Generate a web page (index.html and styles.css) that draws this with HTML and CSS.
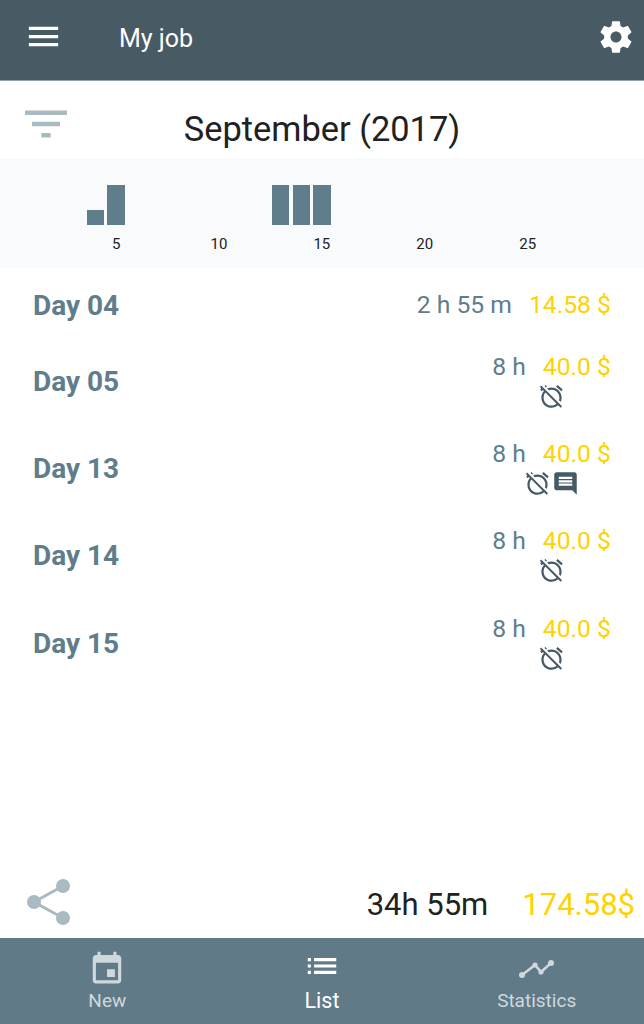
FILE: index.html
```html
<!DOCTYPE html>
<html lang="en">
<head>
<meta charset="utf-8">
<title>My job</title>
<link rel="stylesheet" href="styles.css">
</head>
<body>
<div class="app">
  <header class="topbar">
    <svg class="menu-icon" viewBox="0 0 24 24"><path d="M3 18h18v-2H3v2zm0-5h18v-2H3v2zm0-7v2h18V6H3z"/></svg>
    <span class="app-title">My job</span>
    <svg class="gear-icon" viewBox="0 0 24 24"><path d="M19.43 12.98c.04-.32.07-.64.07-.98s-.03-.66-.07-.98l2.11-1.65c.19-.15.24-.42.12-.64l-2-3.46c-.12-.22-.39-.3-.61-.22l-2.49 1c-.52-.4-1.08-.73-1.69-.98l-.38-2.65C14.46 2.18 14.25 2 14 2h-4c-.25 0-.46.18-.49.42l-.38 2.65c-.61.25-1.17.59-1.69.98l-2.49-1c-.23-.09-.49 0-.61.22l-2 3.46c-.13.22-.07.49.12.64l2.11 1.65c-.04.32-.07.65-.07.98s.03.66.07.98l-2.11 1.65c-.19.15-.24.42-.12.64l2 3.46c.12.22.39.3.61.22l2.49-1c.52.4 1.08.73 1.69.98l.38 2.65c.03.24.24.42.49.42h4c.25 0 .46-.18.49-.42l.38-2.65c.61-.25 1.17-.59 1.69-.98l2.49 1c.23.09.49 0 .61-.22l2-3.46c.12-.22.07-.49-.12-.64l-2.11-1.65zM12 15.5c-1.93 0-3.5-1.57-3.5-3.5s1.57-3.5 3.5-3.5 3.5 1.57 3.5 3.5-1.57 3.5-3.5 3.5z"/></svg>
  </header>

  <section class="month-row">
    <svg class="filter-icon" viewBox="0 0 24 24" preserveAspectRatio="none"><path d="M10 18h4v-2h-4v2zM3 6v2h18V6H3zm3 7h12v-2H6v2z"/></svg>
    <h1 class="month-title">September (2017)</h1>
  </section>

  <section class="chart">
    <div class="bars">
      <div class="bar-slot day-4"><div class="bar" style="height:15px"></div></div>
      <div class="bar-slot day-5"><div class="bar" style="height:40px"></div></div>
      <div class="bar-slot day-13"><div class="bar" style="height:40px"></div></div>
      <div class="bar-slot day-14"><div class="bar" style="height:40px"></div></div>
      <div class="bar-slot day-15"><div class="bar" style="height:40px"></div></div>
      <span class="tick day-5">5</span>
      <span class="tick day-10">10</span>
      <span class="tick day-15">15</span>
      <span class="tick day-20">20</span>
      <span class="tick day-25">25</span>
    </div>
  </section>

  <main class="days">
    <div class="day day-short">
      <span class="day-name">Day 04</span>
      <div class="day-info">
        <div class="amounts"><span class="hours">2 h 55 m</span><span class="money">14.58 $</span></div>
      </div>
    </div>
    <div class="day">
      <span class="day-name">Day 05</span>
      <div class="day-info">
        <div class="amounts"><span class="hours">8 h</span><span class="money">40.0 $</span></div>
        <div class="notes">
          <svg class="note-icon" viewBox="0 0 24 24"><use href="#alarm-off"/></svg>
        </div>
      </div>
    </div>
    <div class="day">
      <span class="day-name">Day 13</span>
      <div class="day-info">
        <div class="amounts"><span class="hours">8 h</span><span class="money">40.0 $</span></div>
        <div class="notes">
          <svg class="note-icon" viewBox="0 0 24 24"><use href="#alarm-off"/></svg>
          <svg class="note-icon flip" viewBox="0 0 24 24"><path d="M20 2H4c-1.1 0-1.99.9-1.99 2L2 22l4-4h14c1.1 0 2-.9 2-2V4c0-1.1-.9-2-2-2zm-2 12H6v-2h12v2zm0-3H6V9h12v2zm0-3H6V6h12v2z"/></svg>
        </div>
      </div>
    </div>
    <div class="day">
      <span class="day-name">Day 14</span>
      <div class="day-info">
        <div class="amounts"><span class="hours">8 h</span><span class="money">40.0 $</span></div>
        <div class="notes">
          <svg class="note-icon" viewBox="0 0 24 24"><use href="#alarm-off"/></svg>
        </div>
      </div>
    </div>
    <div class="day">
      <span class="day-name">Day 15</span>
      <div class="day-info">
        <div class="amounts"><span class="hours">8 h</span><span class="money">40.0 $</span></div>
        <div class="notes">
          <svg class="note-icon" viewBox="0 0 24 24"><use href="#alarm-off"/></svg>
        </div>
      </div>
    </div>
  </main>

  <section class="totals">
    <svg class="share-icon" viewBox="0 0 48 48">
      <path class="share-lines" d="M37 8 8 24l29 16"/>
      <circle cx="37" cy="8" r="7"/><circle cx="8" cy="24" r="7"/><circle cx="37" cy="40" r="7"/>
    </svg>
    <span class="total-hours">34h 55m</span>
    <span class="total-money">174.58$</span>
  </section>

  <nav class="tabs">
    <div class="tab">
      <svg class="tab-icon" viewBox="0 -2 24 24"><path d="M17 12h-5v5h5v-5zM16 1v2H8V1H6v2H5c-1.11 0-1.99.9-1.99 2L3 19c0 1.1.89 2 2 2h14c1.1 0 2-.9 2-2V5c0-1.1-.9-2-2-2h-1V1h-2zm3 18H5V8h14v11z"/></svg>
      <span class="tab-label">New</span>
    </div>
    <div class="tab tab-active">
      <svg class="tab-icon" viewBox="0 0 24 24"><path d="M3 13h2v-2H3v2zm0 4h2v-2H3v2zm0-8h2V7H3v2zm4 4h14v-2H7v2zm0 4h14v-2H7v2zM7 7v2h14V7H7z"/></svg>
      <span class="tab-label">List</span>
    </div>
    <div class="tab">
      <svg class="tab-icon" viewBox="0 -1 38 38">
        <path class="trend-line" d="M4 27 17 17l6 7L33 15"/>
        <circle cx="4" cy="27" r="3"/><circle cx="17" cy="17" r="2.6"/><circle cx="23" cy="24" r="2.6"/><circle cx="33" cy="15" r="3"/>
      </svg>
      <span class="tab-label">Statistics</span>
    </div>
  </nav>
</div>

<svg class="sprite" aria-hidden="true">
  <symbol id="alarm-off" viewBox="0 0 24 24">
    <path d="M12 6c3.87 0 7 3.13 7 7 0 .84-.16 1.65-.43 2.4l1.52 1.52c.58-1.19.91-2.51.91-3.92 0-4.97-4.03-9-9-9-1.41 0-2.73.33-3.92.91L9.6 6.43C10.35 6.16 11.16 6 12 6zm10-.28l-4.6-3.86-1.29 1.53 4.6 3.86L22 5.72zM2.92 2.29L1.65 3.57 2.98 4.9l-1.11.93 1.42 1.42 1.11-.94.8.8C3.83 8.69 3 10.75 3 13c0 4.97 4.03 9 9 9 2.25 0 4.31-.83 5.89-2.2l2.2 2.2 1.27-1.27L3.89 3.27l-.97-.98zm13.55 16.1C15.26 19.39 13.7 20 12 20c-3.87 0-7-3.13-7-7 0-1.7.61-3.26 1.61-4.47l9.86 9.86zM8.02 3.28L6.6 1.86l-.86.71 1.42 1.42.86-.71z"/>
  </symbol>
</svg>
</body>
</html>
```

FILE: styles.css
```css
* { box-sizing: border-box; }
html, body { margin: 0; padding: 0; }
body { font-family: Roboto, "Liberation Sans", sans-serif; background: #fff; color: #212121; }

.app { width: 644px; height: 1024px; display: flex; flex-direction: column; overflow: hidden; }
.sprite { display: none; }

/* Top bar */
.topbar { height: 81px; flex: none; display: flex; align-items: center; padding: 0 9px 7px 24px; background: #485a64; border-bottom: 1px solid #90a4ae; }
.menu-icon { width: 39px; height: 39px; fill: #fff; flex: none; }
.app-title { margin: 4px 0 0 56px; font-size: 25px; color: #fff; }
.gear-icon { width: 38px; height: 38px; margin-left: auto; fill: #fff; flex: none; }

/* Month */
.month-row { height: 77px; flex: none; display: grid; grid-template-columns: 1fr auto 1fr; }
.filter-icon { width: 56px; height: 54px; margin: 16px 0 0 18px; fill: #a9bac2; }
.month-title { grid-column: 2; margin: 0; font-size: 34.4px; font-weight: 400; line-height: 96px; height: 77px; }

/* Chart */
.chart { height: 110px; flex: none; background: #f9fafb; padding: 27px 0 0 23.5px; }
.bars { display: grid; grid-template-columns: repeat(29, 20.58px); grid-template-rows: 40px 40px; }
.bar-slot { grid-row: 1; display: flex; align-items: flex-end; justify-content: center; }
.bar { width: 17.5px; background: #607d8b; }
.tick { grid-row: 2; justify-self: center; font-size: 15px; line-height: 38px; color: #212121; }
.day-4 { grid-column: 4; }
.day-5 { grid-column: 5; }
.day-10 { grid-column: 10; }
.day-13 { grid-column: 13; }
.day-14 { grid-column: 14; }
.day-15 { grid-column: 15; }
.day-20 { grid-column: 20; }
.day-25 { grid-column: 25; }

/* Day list */
.days { flex: 1; padding-top: 5px; }
.day { height: 87.2px; display: flex; align-items: center; justify-content: space-between; padding: 0 33px; }
.day-short { height: 65px; }
.day-name { font-size: 28px; font-weight: 700; color: #607d8b; }
.day-info { display: flex; flex-direction: column; align-items: center; }
.amounts { display: flex; gap: 17px; font-size: 24.7px; line-height: 28px; padding-bottom: 2px; }
.hours { color: #607d8b; }
.money { color: #ffd200; }
.notes { display: flex; gap: 1px; height: 27px; }
.note-icon { width: 27px; height: 27px; fill: #455a64; }
.flip { transform: scaleX(-1); }

/* Totals */
.totals { height: 68px; flex: none; display: flex; align-items: center; padding: 0 9px 0 26px; font-size: 31px; }
.share-icon { width: 48px; height: 48px; margin-bottom: 4px; fill: #a9bac2; flex: none; }
.share-lines { fill: none; stroke: #a9bac2; stroke-width: 3; }
.total-hours { margin-left: auto; color: #212121; }
.total-money { margin-left: 34px; color: #ffd200; }

/* Tabs */
.tabs { height: 86px; flex: none; display: grid; grid-template-columns: repeat(3, 1fr); background: #607a88; }
.tab { display: flex; flex-direction: column; align-items: center; padding-top: 9px; color: #cfd8dc; font-size: 19px; }
.tab-icon { width: 38px; height: 38px; fill: currentColor; flex: none; }
.trend-line { fill: none; stroke: currentColor; stroke-width: 2.5; }
.tab-label { line-height: 24px; margin-top: 4px; }
.tab-active { color: #fff; font-size: 21.5px; }
```
